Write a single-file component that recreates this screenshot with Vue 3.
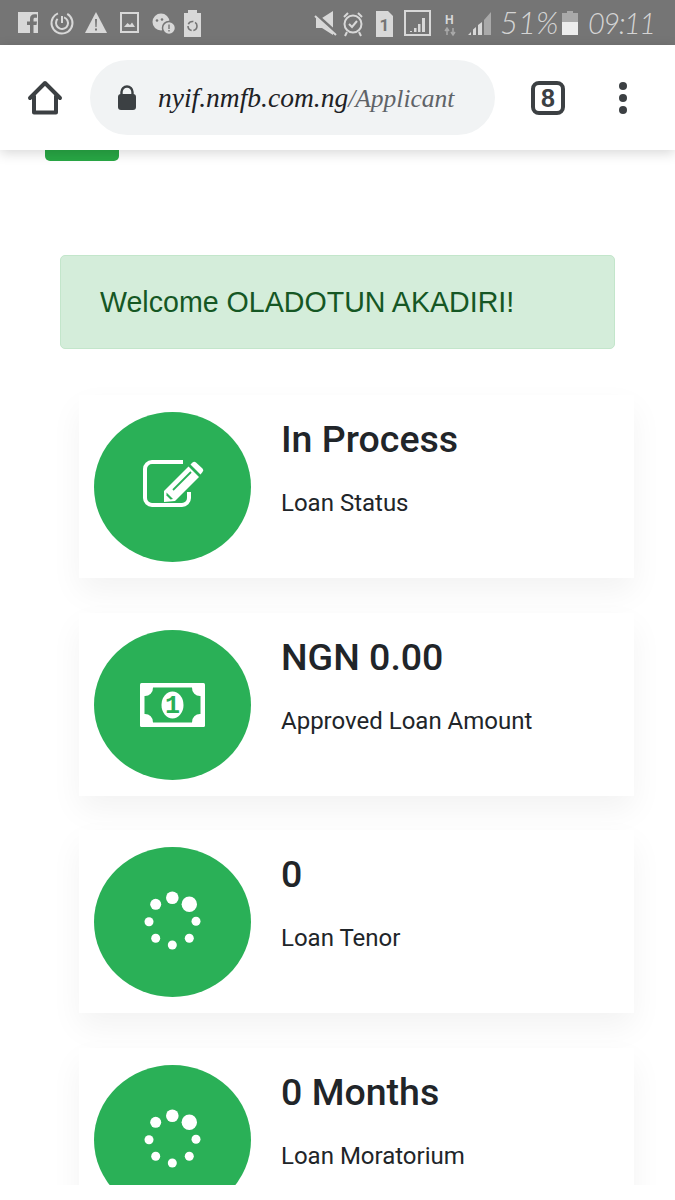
<template>
  <div class="page">
    <div class="status-bar">
      <svg class="status-left" width="196" height="30" viewBox="0 0 196 30">
        <!-- facebook -->
        <path d="M2 4h20v21H17.500v-8h3l.5-3.500h-3.500v-2c0-1.200.4-1.800 1.800-1.800H21V6.500c-.6-.1-1.500-.2-2.500-.2-2.800 0-4.500 1.600-4.500 4.500v2.700h-3V17h3v8H2z" fill="#d8d8d8" />
        <!-- power ring -->
        <circle cx="46" cy="15" r="10.500" fill="none" stroke="#d8d8d8" stroke-width="2" stroke-dasharray="56 10" transform="rotate(-60 46 15)" />
        <circle cx="46" cy="15" r="6" fill="none" stroke="#d8d8d8" stroke-width="2" stroke-dasharray="30 8" transform="rotate(-70 46 15)" />
        <path d="M46 8v7" stroke="#d8d8d8" stroke-width="2" />
        <!-- warning -->
        <path d="M80 4l11 21H69z" fill="#d8d8d8" />
        <path d="M79 11h2l-.4 8h-1.200zM79 20.500h2v2h-2z" fill="#757575" />
        <!-- picture -->
        <rect x="105" y="5" width="17" height="19" fill="none" stroke="#d8d8d8" stroke-width="2" />
        <path d="M108 19l3.500-4 2.500 2 2-2.500 3 4.500z" fill="#d8d8d8" />
        <!-- chat with alert badge -->
        <circle cx="145" cy="14" r="8.500" fill="#d8d8d8" />
        <circle cx="141" cy="12.500" r="1.300" fill="#757575" />
        <circle cx="146" cy="11.500" r="1.300" fill="#757575" />
        <circle cx="153" cy="20" r="6.500" fill="#d8d8d8" stroke="#757575" stroke-width="1.500" />
        <path d="M152.300 16.500h1.400v4.500h-1.400zM152.300 22h1.400v1.500h-1.400z" fill="#757575" />
        <!-- recycle battery -->
        <path d="M172 2h9v3h4v24h-17V5h4z" fill="#d8d8d8" />
        <circle cx="176.500" cy="18" r="4.500" fill="none" stroke="#757575" stroke-width="1.600" stroke-dasharray="6 1.800" />
      </svg>
      <div class="status-right">
        <svg width="183" height="30" viewBox="0 0 183 30">
          <!-- muted speaker -->
          <path d="M4 10h6l11-7v24l-11-7H4z" fill="#d8d8d8" />
          <path d="M3 6l21 19" stroke="#757575" stroke-width="4" />
          <path d="M3 8l21 19" stroke="#d8d8d8" stroke-width="2" />
          <!-- alarm -->
          <g transform="translate(2 0)">
            <circle cx="39" cy="16" r="8.500" fill="none" stroke="#d8d8d8" stroke-width="2" />
            <path d="M35 16l3 3 5-6" fill="none" stroke="#d8d8d8" stroke-width="2" />
            <path d="M30 9l4-4M48 9l-4-4M33 24l-2 4M45 24l2 4" stroke="#d8d8d8" stroke-width="2" />
          </g>
          <!-- sim -->
          <g transform="translate(3 0)">
            <path d="M61 3h12l5 5v21H61z" fill="#d8d8d8" />
            <text x="69.500" y="23" class="sim-num">1</text>
          </g>
          <!-- signal in a box -->
          <g transform="translate(7 0)">
            <rect x="86" y="3" width="25" height="24" fill="none" stroke="#d8d8d8" stroke-width="2" />
            <path d="M91 23h2v1h-2zM95 20h2.500v4H95zM99 16h2.500v8H99zM103 10h3v14h-3z" fill="#d8d8d8" />
          </g>
          <!-- network type and signal -->
          <g transform="translate(8 0)">
            <text x="125" y="16" class="net">H</text>
            <path d="M127 20v7M125 23l2-3 2 3M133 20v7M131 24l2 3 2-3" stroke="#a9a9a9" stroke-width="1.500" fill="none" />
            <path d="M148 27l3-3v3zM153 21.500l3-2.500v8h-3zM158 17l4-3v13h-4z" fill="#d8d8d8" />
            <path d="M164 12l7-8v23h-7z" fill="#a9a9a9" />
          </g>
        </svg>
        <span class="pct">51%</span>
        <svg width="16" height="24" viewBox="0 0 16 24">
          <path d="M5 0h6v2h5v22H0V2h5z" fill="#a9a9a9" />
          <path d="M0 11h16v13H0z" fill="#ececec" />
        </svg>
        <span class="clock">09:11</span>
      </div>
    </div>

    <header class="toolbar">
      <svg class="home" width="36" height="36" viewBox="0 0 36 36">
        <path d="M3 18L18 3l15 15M7 16v16.500h22V16" fill="none" stroke="#3c4043" stroke-width="4" stroke-linejoin="round" stroke-linecap="round" />
      </svg>
      <div class="url-pill">
        <svg width="20" height="26" viewBox="0 0 20 26">
          <path d="M4.500 10V7a5.500 5.500 0 0 1 11 0v3" fill="none" stroke="#3c4043" stroke-width="2.400" />
          <rect x="1" y="9" width="18" height="16" rx="3" fill="#3c4043" />
        </svg>
        <div class="url"><span class="host">nyif.nmfb.com.ng</span><span class="path">/Applicant</span></div>
      </div>
      <div class="tabs">8</div>
      <div class="menu"><i></i><i></i><i></i></div>
    </header>

    <main class="content">
      <div class="green-stub"></div>
      <div class="alert">Welcome OLADOTUN AKADIRI!</div>

      <section v-for="card in cards" :key="card.label" class="card">
        <div class="circle">
          <svg v-if="card.icon === 'edit'" class="icon-edit" width="66" height="56" viewBox="0 0 66 56">
            <path d="M43 6H12a7 7 0 0 0-7 7v29a7 7 0 0 0 7 7h30a7 7 0 0 0 7-7v-6" fill="none" stroke="#fff" stroke-width="4" />
            <path d="M50.500 8.500l2-2a2.500 2.500 0 0 1 3.500 0l6.500 6a2.500 2.500 0 0 1 0 3.500l-2 2.500z" fill="#fff" />
            <path d="M48.500 10.500l10.500 10.500-24 24-11 1v-11z" fill="#fff" />
            <path d="M33 34l18-18" stroke="#2ab057" stroke-width="1.800" />
            <path d="M26.500 36.500l6.500 6.500-2.500.5-4-4z" fill="#2ab057" />
          </svg>
          <svg v-else-if="card.icon === 'money'" width="65" height="44" viewBox="0 0 65 44">
            <rect width="65" height="44" rx="1.500" fill="#fff" />
            <path d="M13 4.500h39a8 8 0 0 0 8.500 8.500v18a8 8 0 0 0-8.500 8.500H13a8 8 0 0 0-8.500-8.500V13A8 8 0 0 0 13 4.500z" fill="#2ab057" />
            <ellipse cx="32.500" cy="22" rx="11" ry="13.500" fill="#fff" />
            <text x="32.500" y="30" class="bill-num">1</text>
          </svg>
          <svg v-else class="icon-spinner" width="80" height="80" viewBox="0 0 80 80">
            <circle v-for="dot in spinnerDots" :key="dot[0] + '-' + dot[1]" :cx="dot[0]" :cy="dot[1]" :r="dot[2]" fill="#fff" />
          </svg>
        </div>
        <div class="card-text">
          <h3>{{ card.value }}</h3>
          <p>{{ card.label }}</p>
        </div>
      </section>
    </main>
  </div>
</template>

<script setup>
const cards = [
  { value: "In Process", label: "Loan Status", icon: "edit" },
  { value: "NGN 0.00", label: "Approved Loan Amount", icon: "money" },
  { value: "0", label: "Loan Tenor", icon: "spinner" },
  { value: "0 Months", label: "Loan Moratorium", icon: "spinner" },
];

// x, y, radius of each dot going round the spinner
const spinnerDots = [
  [42.3, 17.7, 6.3],
  [59.3, 24.3, 7.7],
  [66, 41.3, 4.5],
  [59.3, 58.3, 4.5],
  [42.3, 65, 4.5],
  [25.7, 58.3, 4.5],
  [19, 41.7, 4.5],
  [25.7, 24.3, 5.5],
];
</script>

<style>
html,
body {
  margin: 0;
  background: #fff;
}
</style>

<style scoped>
.page {
  width: 675px;
  height: 1185px;
  overflow: hidden;
  font-family: Roboto, "Liberation Sans", sans-serif;
  color: #212529;
  background: #fff;
}

.status-bar {
  height: 45px;
  background: #757575;
  display: flex;
  align-items: center;
  justify-content: space-between;
  padding: 0 23px 0 16px;
}

.status-left {
  display: block;
}

.status-right {
  display: flex;
  align-items: center;
}

.sim-num {
  font: 700 17px Roboto, sans-serif;
  fill: #757575;
  text-anchor: middle;
}

.net {
  font: 700 12px "Liberation Sans", sans-serif;
  fill: #d8d8d8;
}

.pct,
.clock {
  font: italic 300 31px/1 Lato, "Liberation Serif", serif;
  color: #d4d4d4;
}

.pct {
  width: 62px;
  margin-left: 5px;
  white-space: nowrap;
}

.clock {
  margin-left: 10px;
  width: 64px;
  white-space: nowrap;
  font-size: 29px;
  letter-spacing: -1.500px;
}

.toolbar {
  position: relative;
  z-index: 2;
  height: 105px;
  background: #fff;
  box-shadow: 0 3px 12px rgba(0, 0, 0, 0.16);
  display: flex;
  align-items: center;
  padding-left: 27px;
}

.home {
  flex: none;
}

.url-pill {
  width: 405px;
  height: 75px;
  margin-left: 27px;
  border-radius: 38px;
  background: #f1f3f4;
  display: flex;
  align-items: center;
  box-sizing: border-box;
  padding-left: 27px;
}

.url {
  width: 301px;
  margin-left: 21px;
  white-space: nowrap;
  font: italic 400 27.500px/1.200 "Liberation Serif", serif;
}

.host {
  color: #202124;
}

.path {
  color: #5f6368;
  font-size: 25.500px;
}

.tabs {
  width: 26px;
  height: 26px;
  margin-left: 36px;
  border: 4px solid #3c4043;
  border-radius: 8px;
  text-align: center;
  font: 700 25px/26px "Liberation Sans Narrow", "Liberation Sans", sans-serif;
  color: #3c4043;
}

.menu {
  margin-left: 54px;
  display: flex;
  flex-direction: column;
  gap: 4px;
}

.menu i {
  width: 8px;
  height: 8px;
  border-radius: 50%;
  background: #3c4043;
}

.content {
  display: flex;
  flex-direction: column;
}

.green-stub {
  width: 74px;
  height: 11px;
  margin-left: 45px;
  background: #28a745;
  border-radius: 0 0 5px 5px;
}

.alert {
  box-sizing: border-box;
  width: 555px;
  height: 94px;
  margin: 94px 0 46px 60px;
  padding-left: 39px;
  display: flex;
  align-items: center;
  background: #d4edda;
  border: 1px solid #c3e6cb;
  border-radius: 5px;
  color: #155724;
  font: 400 28.600px "Liberation Sans", sans-serif;
}

.card {
  box-sizing: border-box;
  width: 555px;
  height: 183px;
  margin: 0 0 34.700px 79px;
  padding: 17px 15px;
  display: flex;
  gap: 30px;
  background: #fff;
  box-shadow: 0 14px 30px rgba(0, 0, 0, 0.05);
}

.circle {
  flex: none;
  width: 157px;
  height: 150px;
  border-radius: 50%;
  background: #2ab057;
  display: flex;
  align-items: center;
  justify-content: center;
}

.icon-edit {
  margin-bottom: 6px;
}

.icon-spinner {
  margin: 0 5px 4px 0;
}

.bill-num {
  font: 700 25px "Liberation Mono", monospace;
  fill: #2ab057;
  text-anchor: middle;
}

.card-text h3 {
  margin: 5px 0 0;
  font-size: 37.500px;
  font-weight: 500;
  line-height: 44px;
}

.card-text p {
  margin: 27px 0 0;
  font-size: 24px;
  line-height: 30px;
}
</style>
